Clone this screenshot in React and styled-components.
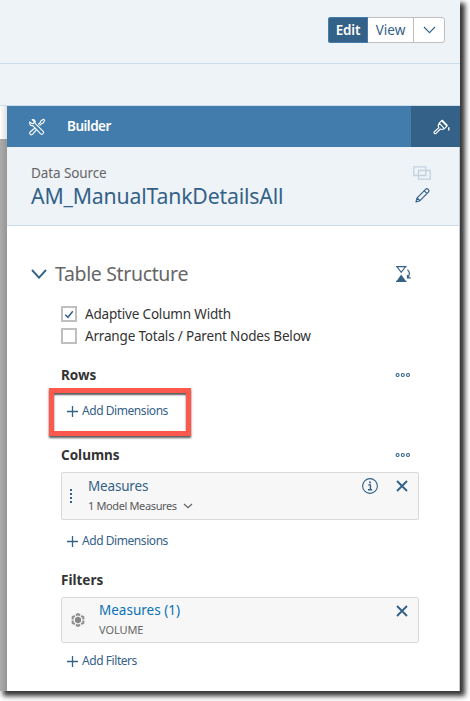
import React from 'react';
import styled, { createGlobalStyle } from 'styled-components';

const navy = '#346187';

const Global = createGlobalStyle`
  * { box-sizing: border-box; }
  html, body { margin: 0; background: #fff; }
  body { overflow: hidden; font-family: "Noto Sans", "Open Sans", sans-serif; color: #333; }
  button { font-family: inherit; }
  svg { display: block; flex: none; }
`;
const Stage = styled.div`
  width: 470px;
  height: 701px;
  overflow: hidden;
`;
const Window = styled.div`
  width: 460px;
  height: 691px;
  display: flex;
  flex-direction: column;
  background: #fff;
  box-shadow: 4px 4px 5px 1px rgba(0, 0, 0, 0.8);
`;
const TopBar = styled.header`
  height: 64px;
  padding: 17px 15px 0 0;
  display: flex;
  justify-content: flex-end;
  background: #eef3f8;
  border-bottom: 1px solid #cddceb;
`;
const SubBar = styled.div`
  height: 42px;
  background: #eef3f8;
  border-bottom: 1px solid #cddceb;
`;
const ModeSwitch = styled.div`
  display: flex;
  width: 117px;
  height: 26px;
  border: 1px solid #bfbfbf;
  border-radius: 3px;
  background: #fff;
`;
const ModeButton = styled.button`
  display: flex;
  align-items: center;
  justify-content: center;
  width: ${p => p.$w}px;
  height: ${p => (p.$active ? 26 : 24)}px;
  margin: ${p => (p.$active ? '-1px 0 0 -1px' : '0')};
  padding: 0;
  border: 0;
  border-left: ${p => (p.$divided ? '1px solid #bfbfbf' : '0')};
  border-radius: ${p => (p.$active ? '3px 0 0 3px' : '0')};
  background: ${p => (p.$active ? navy : 'transparent')};
  box-shadow: ${p => (p.$active ? 'inset 0 0 0 1px #427cac' : 'none')};
`;
const Text = styled.span`
  font-size: ${p => p.$size || 13.5}px;
  line-height: ${p => p.$line || 20}px;
  font-weight: ${p => p.$weight || 400};
  letter-spacing: ${p => (p.$track === undefined ? -0.18 : p.$track)}px;
  color: ${p => p.$color || navy};
  white-space: nowrap;
`;
const Body = styled.div`
  display: flex;
  flex: 1;
  min-height: 0;
`;
const Gutter = styled.div`
  width: 7px;
  background: linear-gradient(90deg, transparent, rgba(0, 0, 0, 0.12)),
    linear-gradient(#fff 33px, #ababab 33px);
`;
const Panel = styled.main`
  width: 453px;
  border-right: 1px solid #c5cbd0;
`;
const PanelBar = styled.div`
  display: flex;
  align-items: center;
  width: 453px;
  height: 41px;
  padding-left: 21px;
  background: #427cac;
`;
const BarTitle = styled.div`
  flex: 1;
  display: flex;
  padding: 0 0 2px 21px;
`;
const StyleTab = styled.div`
  width: 49px;
  height: 41px;
  padding: 13px 0 0 22px;
  background: ${navy};
`;
const Source = styled.section`
  display: flex;
  justify-content: space-between;
  height: 79px;
  padding: 16px 28px 0 24px;
  background: #eef3f8;
  border-bottom: 1px solid #cddceb;
`;
const SourceNames = styled.div`
  display: flex;
  flex-direction: column;
`;
const SourceTools = styled.div`
  display: flex;
  flex-direction: column;
  align-items: center;
  gap: 8px;
  padding-top: 3px;
`;
const Content = styled.section`
  display: flex;
  flex-direction: column;
  padding: 33px 41px 0 24px;
`;
const Row = styled.div`
  display: flex;
  align-items: center;
  height: ${p => p.$h}px;
  padding-left: ${p => p.$indent || 0}px;
  padding-top: ${p => p.$top || 0}px;
  gap: ${p => p.$gap || 0}px;
`;
const Push = styled.div`
  margin-left: auto;
  padding-right: ${p => p.$right || 0}px;
`;
const Structure = styled.div`
  display: flex;
  flex-direction: column;
  padding: 14px 0 0 30px;
`;
const Box = styled.span`
  display: grid;
  place-items: center;
  width: 16px;
  height: 16px;
  border: 2px solid #bfbfbf;
  background: #fff;
`;
const Highlight = styled.div`
  display: flex;
  align-items: center;
  width: 142px;
  height: 48px;
  margin: 2px 0 9px -12px;
  padding: 0 0 2px 13px;
  border: 5px solid #fe594c;
  box-shadow: 0 2px 2px rgba(0, 0, 0, 0.65), inset 0 2px 2px rgba(0, 0, 0, 0.65);
`;
const AddLine = styled.div`
  display: flex;
  align-items: center;
  gap: 4px;
`;
const Card = styled.div`
  display: flex;
  width: 358px;
  height: ${p => p.$h}px;
  margin-top: ${p => p.$gapAbove || 0}px;
  padding: ${p => p.$top}px 10px 0 ${p => p.$left}px;
  background: #f7f7f7;
  border: 1px solid #d9d9d9;
  border-radius: 2px;
`;
const CardText = styled.div`
  display: flex;
  flex-direction: column;
  padding-left: ${p => p.$left}px;
`;
const SubLine = styled.div`
  display: flex;
  align-items: center;
  gap: 6px;
  height: ${p => p.$h || 19}px;
`;
const CardTools = styled.div`
  display: flex;
  align-items: center;
  gap: 18px;
  height: 20px;
  margin-left: auto;
  padding-top: ${p => p.$top || 0}px;
`;
const HandleSlot = styled.div`
  padding-top: ${p => p.$top}px;
`;

const Chevron = ({ w, h, color = navy, stroke = 1.3 }) => (
  <svg width={w} height={h} viewBox={`0 0 ${w} ${h}`} fill="none" stroke={color} strokeWidth={stroke}>
    <path d={`M1 1 L${w / 2} ${h - 1.3} L${w - 1} 1`} />
  </svg>
);
const Plus = () => (
  <svg width="11" height="11" viewBox="0 0 11 11" stroke={navy} strokeWidth="1.3">
    <path d="M5.5 0v11M0 5.5h11" />
  </svg>
);
const Close = () => (
  <svg width="12" height="12" viewBox="0 0 12 12" stroke={navy} strokeWidth="1.9">
    <path d="M1 1l10 10M11 1L1 11" />
  </svg>
);
const Dots = () => (
  <svg width="16" height="6" viewBox="0 0 16 6" fill="none" stroke={navy} strokeWidth="1.1">
    <circle cx="2.6" cy="3" r="1.5" />
    <circle cx="7.8" cy="3" r="1.5" />
    <circle cx="13" cy="3" r="1.5" />
  </svg>
);
const Tools = () => (
  <svg width="18" height="18" viewBox="0 0 18 18" fill="none" stroke="#fff" strokeWidth="1.1" strokeLinejoin="round">
    <path d="M4.2 1.5l1.9 2-.4 1.9-1.9.3-2-1.8c-.7 2.5.8 4.1 3 3.7l7.9 8.2c1.5 1.4 4-.8 2.5-2.5L7.1 5.3C7.6 3 6.5 1.2 4.2 1.5z" />
    <path d="M10.3 6.5l2.2-2.3.5-1.5 2.6-1.5 1.1 1.1-1.5 2.6-1.5.5-2.2 2.3M7.3 9.7l-5 4.1c-1.6 1.8.6 4 2.4 2.4L8.8 11.3" />
  </svg>
);
const Brush = () => (
  <svg width="17" height="16" viewBox="0 0 17 16" fill="none" stroke="#fff" strokeWidth="1.15" strokeLinejoin="round">
    <path d="M6.2 4.2l5.2 5.4-1.8.9-2.2-.5L3 14.4c-1.2.8-2.5-.4-1.7-1.7l4.6-4.1-.8-2.2z" />
    <path d="M6.2 4.2l2.7-2.9M14.2 6.8l-2.8 2.8" />
    <path d="M8.7 1.2l5.6 5.7" strokeWidth="2" />
    <path d="M15.8 8.2v3.4" strokeWidth="1.4" />
  </svg>
);
const Overlap = () => (
  <svg width="18" height="14" viewBox="0 0 18 14" fill="none" stroke="#c3d1df" strokeWidth="1.3">
    <path d="M.8.8h12v8.7H.8zM5.5 4.5h11.7v8.7H5.5z" />
  </svg>
);
const Pencil = () => (
  <svg width="15" height="15" viewBox="0 0 15 15" fill="none" stroke={navy} strokeWidth="1.2" strokeLinejoin="round">
    <path d="M1 14l1.1-4.1L10.8 1.2c1.5-1.3 4 .9 2.8 2.7L5 12.7zM9.3 2.9l2.8 2.8M2.1 9.9L5 12.7" />
  </svg>
);
const Hourglass = () => (
  <svg width="16" height="16" viewBox="0 0 16 16" fill="none" stroke={navy} strokeWidth="1.2">
    <path d="M0 .7h10.5M0 15.3h10.5M1.2 1L5.2 6.3 9.3 1" />
    <path d="M5.2 8.6L9.8 15H.7z" fill={navy} stroke="none" />
    <path d="M11.4 3.8c2.5 1.8 2.6 5 .4 7.8M14.7 11.8h-3.2V8.9" />
  </svg>
);
const Info = () => (
  <svg width="16" height="16" viewBox="0 0 16 16" fill="none" stroke={navy}>
    <circle cx="8" cy="8" r="7.4" strokeWidth="1.1" />
    <path d="M6.2 6.9h2.2v4.7M6 11.7h4.2" strokeWidth="1.4" />
    <path d="M7.1 4.4h1.8" strokeWidth="1.8" />
  </svg>
);
const Handle = () => (
  <svg width="2" height="14" viewBox="0 0 2 14" fill={navy}>
    <path d="M0 0h2v2H0zM0 4h2v2H0zM0 8h2v2H0zM0 12h2v2H0z" />
  </svg>
);
const Cube = () => (
  <svg width="14" height="14" viewBox="0 0 14 14" fill="#858585">
    <path d="M7 3.5l3 1.7v3.6l-3 1.7-3-1.7V5.2z" />
    <path
      d="M4.9 2.2L7 1.1l2.1 1.1M10.2 2.8l2.1 1.2v2.4M12.3 7.6V10l-2.1 1.2M9.1 11.8L7 12.9l-2.1-1.1M3.8 11.2L1.7 10V7.6M1.7 6.4V4l2.1-1.2"
      fill="none"
      stroke="#8f8f8f"
      strokeWidth="2.1"
    />
  </svg>
);
const Check = () => (
  <svg width="10" height="9" viewBox="0 0 10 9" fill="none" stroke={navy} strokeWidth="1.5">
    <path d="M1.2 4.7L3.9 7.3 8.8 1.2" />
  </svg>
);

const Add = ({ children }) => (
  <AddLine>
    <Plus />
    <Text $size={12} $track={-0.44}>{children}</Text>
  </AddLine>
);
const Heading = ({ children }) => (
  <Text $weight={700} $color="#333" $track={0}>{children}</Text>
);

export default function App() {
  return (
    <Stage>
      <Global />
      <Window>
        <TopBar>
          <ModeSwitch>
            <ModeButton $active $w={40}><Text $weight={600} $color="#fff" $track={-0.15}>Edit</Text></ModeButton>
            <ModeButton $w={45}><Text $track={0}>View</Text></ModeButton>
            <ModeButton $divided $w={31}><Chevron w={13} h={8} stroke={1.1} /></ModeButton>
          </ModeSwitch>
        </TopBar>
        <SubBar />
        <Body>
          <Gutter />
          <Panel>
            <PanelBar>
              <Tools />
              <BarTitle><Text $weight={600} $color="#fff" $track={-0.5}>Builder</Text></BarTitle>
              <StyleTab><Brush /></StyleTab>
            </PanelBar>
            <Source>
              <SourceNames>
                <Text $color="#666" $track={-0.1}>Data Source</Text>
                <Text $size={21.25} $line={26} $track={-0.18}>AM_ManualTankDetailsAll</Text>
              </SourceNames>
              <SourceTools><Overlap /><Pencil /></SourceTools>
            </Source>
            <Content>
              <Row $h={30} $gap={8}>
                <Chevron w={16} h={10} stroke={1.9} />
                <Text $size={19.5} $color="#666" $track={-0.35}>Table Structure</Text>
                <Push $right={6}><Hourglass /></Push>
              </Row>
              <Structure>
                <Row $h={22} $gap={8}>
                  <Box><Check /></Box>
                  <Text $color="#333">Adaptive Column Width</Text>
                </Row>
                <Row $h={22} $gap={8}>
                  <Box />
                  <Text $color="#333">Arrange Totals / Parent Nodes Below</Text>
                </Row>
                <Row $h={39} $top={17}>
                  <Heading>Rows</Heading>
                  <Push $right={7}><Dots /></Push>
                </Row>
                <Highlight><Add>Add Dimensions</Add></Highlight>
                <Row $h={20}>
                  <Heading>Columns</Heading>
                  <Push $right={7}><Dots /></Push>
                </Row>
                <Card $h={48} $gapAbove={7} $top={3} $left={8}>
                  <HandleSlot $top={13}><Handle /></HandleSlot>
                  <CardText $left={16}>
                    <Text>Measures</Text>
                    <SubLine>
                      <Text $size={11} $color="#595959" $track={-0.37}>1 Model Measures</Text>
                      <Chevron w={10} h={6} color="#666" />
                    </SubLine>
                  </CardText>
                  <CardTools><Info /><Close /></CardTools>
                </Card>
                <Row $h={42} $indent={6}><Add>Add Dimensions</Add></Row>
                <Row $h={35}><Heading>Filters</Heading></Row>
                <Card $h={46} $top={2} $left={9}>
                  <HandleSlot $top={13}><Cube /></HandleSlot>
                  <CardText $left={14}>
                    <Text $color="#0a72b5" $track={0}>Measures (1)</Text>
                    <SubLine $h={20}><Text $size={11} $color="#666" $track={-0.1}>VOLUME</Text></SubLine>
                  </CardText>
                  <CardTools $top={2}><Close /></CardTools>
                </Card>
                <Row $h={36} $indent={6}><Add>Add Filters</Add></Row>
              </Structure>
            </Content>
          </Panel>
        </Body>
      </Window>
    </Stage>
  );
}
